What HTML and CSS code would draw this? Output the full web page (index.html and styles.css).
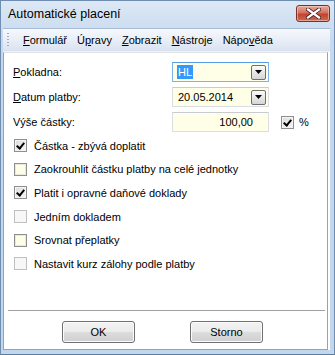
FILE: index.html
```html
<!DOCTYPE html>
<html>
<head>
    <meta name="viewport" content="width=device-width, initial-scale=1.0">
    <title>Automatické placení</title>
    <link rel="stylesheet" href="styles.css">
</head>
<body>
    <div class="window">
        <div class="titlebar">
            <span class="title">Automatické placení</span>
            <button class="close" type="button">
                <svg width="15" height="11" viewBox="0 0 15 11">
                    <path d="M2 1.5 L13 9.5 M13 1.5 L2 9.5" stroke="#4a2420" stroke-width="4" stroke-linecap="square"/>
                    <path d="M2 1.5 L13 9.5 M13 1.5 L2 9.5" stroke="#ffffff" stroke-width="2.2" stroke-linecap="square"/>
                </svg>
            </button>
        </div>
        <div class="client">
            <div class="menubar">
                <span class="grip"></span>
                <span class="menu-item"><u>F</u>ormulář</span>
                <span class="menu-item">Ú<u>p</u>ravy</span>
                <span class="menu-item"><u>Z</u>obrazit</span>
                <span class="menu-item"><u>N</u>ástroje</span>
                <span class="menu-item">Nápo<u>v</u>ěda</span>
            </div>
            <div class="panel">
                <div class="form">
                    <label class="label"><u>P</u>okladna:</label>
                    <div class="field focused">
                        <span class="selected">HL</span>
                        <span class="drop"><svg width="7" height="4" viewBox="0 0 7 4"><path d="M0 0 H7 L3.5 4 Z" fill="#000"/></svg></span>
                    </div>
                    <span></span>

                    <label class="label"><u>D</u>atum platby:</label>
                    <div class="field">
                        <span class="value">20.05.2014</span>
                        <span class="drop"><svg width="7" height="4" viewBox="0 0 7 4"><path d="M0 0 H7 L3.5 4 Z" fill="#000"/></svg></span>
                    </div>
                    <span></span>

                    <label class="label">Výše částky:</label>
                    <div class="field number">100,00</div>
                    <div class="percent"><span class="box checked"></span>%</div>
                </div>

                <div class="checks">
                    <div class="check"><span class="box checked"></span>Částka - zbývá doplatit</div>
                    <div class="check"><span class="box empty"></span>Zaokrouhlit částku platby na celé jednotky</div>
                    <div class="check"><span class="box checked"></span>Platit i opravné daňové doklady</div>
                    <div class="check"><span class="box disabled"></span>Jedním dokladem</div>
                    <div class="check"><span class="box empty"></span>Srovnat přeplatky</div>
                    <div class="check"><span class="box disabled"></span>Nastavit kurz zálohy podle platby</div>
                </div>

                <div class="separator"></div>
                <div class="buttons">
                    <button class="btn" type="button">OK</button>
                    <button class="btn" type="button">Storno</button>
                </div>
            </div>
        </div>
    </div>
</body>
</html>
```

FILE: styles.css
```css
/* Okno dialogu ve stylu Windows 7 basic */
body {
    margin: 0;
    padding: 0;
    font-family: "Liberation Sans", Arial, sans-serif;
    font-size: 11px;
    color: #000;
}
.window {
    width: 335px;
    height: 355px;
    box-sizing: border-box;
    border: 1px solid #6e8db1;
    border-bottom-color: #5a7da8;
    background: linear-gradient(#dce8f5, #c6d9ee 40px, #c2d6ed);
    padding: 0 4px 4px 2px;
    display: flex;
    flex-direction: column;
}
.titlebar {
    height: 27px;
    display: flex;
    align-items: center;
    justify-content: space-between;
    padding-left: 5px;
}
.title {
    font-size: 12.5px;
    margin-top: -1px;
}
.close {
    width: 34px;
    height: 17px;
    margin-top: -3px;
    border: 1px solid #7d3029;
    border-radius: 3px;
    background: linear-gradient(#e8a99e, #d4705f 45%, #c2432f 55%, #cc6a52);
    box-shadow: inset 0 0 0 1px rgba(255, 220, 210, 0.5);
    padding: 0;
    display: flex;
    align-items: center;
    justify-content: center;
}
.client {
    flex: 1;
    display: flex;
    flex-direction: column;
    background: #fff;
    border-top: 1px solid #a7bcd6;
}
.menubar {
    height: 22px;
    display: flex;
    align-items: center;
    background: linear-gradient(#f6f8fc, #e6ecf6 60%, #d9e2f1);
    border-bottom: 1px solid #f0f0f0;
}
.grip {
    width: 2px;
    height: 16px;
    margin: 0 8px 0 4px;
    background-image: radial-gradient(circle, #a0afc3 45%, transparent 55%);
    background-size: 2px 3px;
}
.menu-item {
    padding: 0 5px 0 6px;
}
.menu-item + .menu-item {
    padding-left: 5px;
}
.panel {
    flex: 1;
    display: flex;
    flex-direction: column;
    border: 1px solid #a0a0a0;
    border-top-color: #e3e3e3;
    margin-right: 2px;
    padding: 9px 0 0 9px;
}
.form {
    display: grid;
    grid-template-columns: 159px 97px auto;
    grid-auto-rows: 20px;
    row-gap: 5px;
    align-items: center;
}
.label u, .menu-item u {
    text-decoration-thickness: 1px;
    text-underline-offset: 1px;
}
.field {
    height: 20px;
    box-sizing: border-box;
    border: 1px solid #dcdde3;
    border-top-color: #c9cbd2;
    background: #fffee6;
    display: flex;
    align-items: center;
    justify-content: space-between;
    padding: 0 2px 0 5px;
}
.field.focused {
    border-color: #7eb4ea;
    border-top-color: #569de5;
}
.selected {
    background: #3399ff;
    color: #fff;
    padding: 0 1px;
    line-height: 14px;
    margin-left: -1px;
}
.field.number {
    justify-content: flex-end;
    padding-right: 15px;
}
.drop {
    width: 13px;
    height: 13px;
    border: 1px solid #6f6f6f;
    border-radius: 2px;
    background: linear-gradient(#fbfbfb, #e8e8e8 50%, #d6d6d6);
    display: flex;
    align-items: center;
    justify-content: center;
}
.percent {
    display: flex;
    align-items: center;
    margin-left: 12px;
}
.percent .box {
    margin-right: 5px;
}
.checks {
    margin-top: 2px;
}
.check {
    height: 23.6px;
    display: flex;
    align-items: center;
}
.check .box {
    margin: 0 7px 0 1px;
}
.box {
    width: 11px;
    height: 11px;
    border: 1px solid #8f8f8f;
    background: linear-gradient(135deg, #dcdcdc, #f6f6f6);
    box-shadow: inset 0 0 0 1px #f4f4f4;
    position: relative;
}
.box.checked::after {
    content: "";
    position: absolute;
    left: 3px;
    top: 1px;
    width: 3px;
    height: 6px;
    border: solid #000;
    border-width: 0 2px 2px 0;
    transform: rotate(40deg);
}
.box.empty {
    background: #fdfde8;
    box-shadow: inset 0 0 0 1px #e9e9e0;
}
.box.disabled {
    border-color: #c0c0c0;
    background: #f7f7f7;
    box-shadow: none;
}
.separator {
    margin-top: auto;
    margin-right: 2px;
    margin-left: -5px;
    border-top: 1px solid #a0a0a0;
}
.buttons {
    display: flex;
    gap: 55px;
    padding: 10px 0 6px 49px;
}
.btn {
    width: 73px;
    height: 22px;
    border: 1px solid #707070;
    border-radius: 3px;
    background: linear-gradient(#f2f2f2, #ebebeb 50%, #dddddd 50%, #cfcfcf);
    box-shadow: inset 0 0 0 1px #fcfcfc;
    font-family: "Liberation Sans", Arial, sans-serif;
    font-size: 11px;
    color: #000;
    padding: 0;
}
```
